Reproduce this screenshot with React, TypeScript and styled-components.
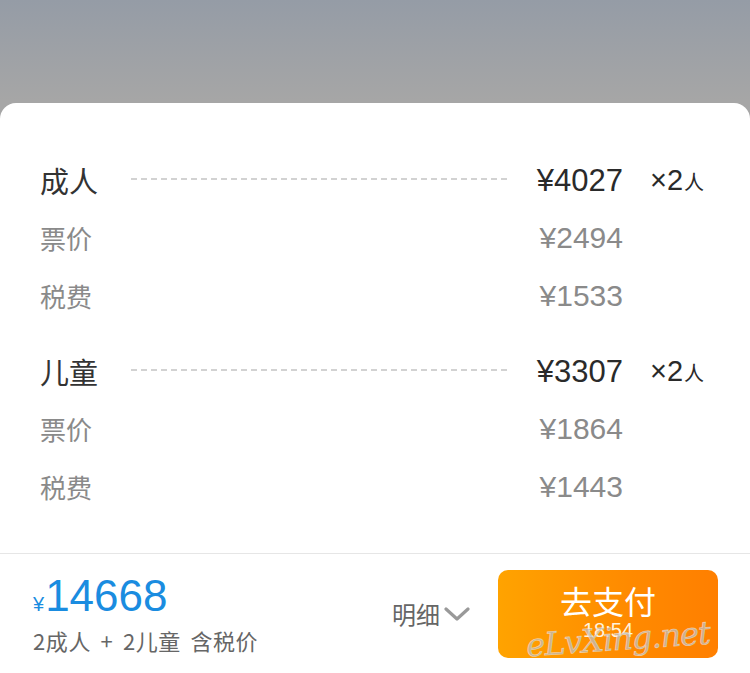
import React from 'react';
import styled, { createGlobalStyle } from 'styled-components';

const GlobalStyle = createGlobalStyle`
  html, body {
    margin: 0;
    padding: 0;
    background: #ffffff;
  }
  body {
    font-family: "Liberation Sans", "Noto Sans CJK SC", sans-serif;
  }
`;

//#region Styled
const Page = styled.div`
  width: 750px;
  height: 673px;
  display: flex;
  flex-direction: column;
  overflow: hidden;
  background: linear-gradient(180deg, #959ca6 0px, #a6a6a6 100px);
`;

const Backdrop = styled.div`
  height: 103px;
  flex: 0 0 auto;
`;

const Sheet = styled.div`
  flex: 1;
  display: flex;
  flex-direction: column;
  background: #ffffff;
  border-radius: 16px 16px 0 0;
`;

const Breakdown = styled.div`
  display: flex;
  flex-direction: column;
  gap: 17px;
  padding: 48px 0 37px;
  border-bottom: 1px solid #e6e6e6;
`;

const Group = styled.div`
  display: flex;
  flex-direction: column;
`;

const Row = styled.div`
  display: grid;
  grid-template-columns: 91px 1fr 116px 83px;
  align-items: center;
  height: 58px;
  padding: 0 44px 0 40px;
`;

const Label = styled.div<{ $main?: boolean }>`
  font-family: "Noto Sans CJK SC", sans-serif;
  font-size: ${(p) => (p.$main ? '29px' : '26px')};
  color: ${(p) => (p.$main ? '#333333' : '#8a8a8a')};
  line-height: 1;
`;

const Dashes = styled.div`
  height: 0;
  border-top: 2px dashed #d2d2d2;
  margin-top: -2px;
`;

const Price = styled.div<{ $main?: boolean }>`
  grid-column: 3;
  justify-self: end;
  font-size: ${(p) => (p.$main ? '31px' : '30px')};
  color: ${(p) => (p.$main ? '#2a2a2a' : '#8a8a8a')};
  line-height: 1;
`;

const Count = styled.div`
  padding-left: 27px;
  font-size: 29px;
  color: #2a2a2a;
  line-height: 1;
  white-space: nowrap;

  small {
    font-family: "Noto Sans CJK SC", sans-serif;
    font-size: 20px;
    margin-left: 1px;
  }
`;

const Footer = styled.div`
  flex: 1;
  display: flex;
  align-items: center;
  padding: 0 32px 0 33px;
  position: relative;
`;

const Total = styled.div`
  flex: 1;
  display: flex;
  flex-direction: column;
  gap: 6px;
  padding-top: 2px;
`;

const Amount = styled.div`
  color: #1a8ce0;
  font-size: 44px;
  line-height: 1;
  display: flex;
  align-items: baseline;

  span {
    font-size: 20px;
    margin-right: 1px;
  }
`;

const Note = styled.div`
  font-family: "Noto Sans CJK SC", sans-serif;
  font-size: 22px;
  letter-spacing: 0.6px;
  word-spacing: 4px;
  color: #666666;
`;

const Detail = styled.button`
  display: flex;
  align-items: center;
  gap: 4px;
  margin-right: 28px;
  padding: 0;
  border: none;
  background: none;
  font-family: "Noto Sans CJK SC", sans-serif;
  font-size: 24px;
  color: #666666;
  cursor: pointer;
`;

const PayButton = styled.button`
  width: 220px;
  height: 88px;
  border: none;
  border-radius: 10px;
  background: linear-gradient(90deg, #ffa300 0%, #ff8a00 60%, #ff7f00 100%);
  color: #ffffff;
  display: flex;
  flex-direction: column;
  align-items: center;
  justify-content: center;
  gap: 2px;
  cursor: pointer;
  padding: 0;
`;

const PayLabel = styled.div`
  font-family: "Noto Sans CJK SC", sans-serif;
  font-size: 32px;
  line-height: 1.1;
  margin-top: -4px;
`;

const Timer = styled.div`
  font-size: 20px;
  color: #fff3dc;
  line-height: 1;
`;

const Watermark = styled.div`
  position: absolute;
  left: 526px;
  top: 66px;
  font-family: "DejaVu Serif", serif;
  font-style: italic;
  font-size: 32px;
  letter-spacing: -1px;
  color: rgba(190, 190, 190, 0.75);
  -webkit-text-stroke: 0.6px rgba(255, 255, 255, 0.5);
  transform: rotate(-4deg);
  pointer-events: none;
`;
//#endregion

interface Line {
  label: string;
  price: string;
}

interface Section {
  title: string;
  price: string;
  count: number;
  lines: Line[];
}

const sections: Section[] = [
  {
    title: '成人',
    price: '¥4027',
    count: 2,
    lines: [
      { label: '票价', price: '¥2494' },
      { label: '税费', price: '¥1533' },
    ],
  },
  {
    title: '儿童',
    price: '¥3307',
    count: 2,
    lines: [
      { label: '票价', price: '¥1864' },
      { label: '税费', price: '¥1443' },
    ],
  },
];

const Chevron = () => (
  <svg width="26" height="16" viewBox="0 0 26 16">
    <path d="M2 3 L13 13 L24 3" fill="none" stroke="#999999" strokeWidth="3.2" strokeLinecap="round" strokeLinejoin="round" />
  </svg>
);

export default function App() {
  return (
    <>
      <GlobalStyle />
      <Page>
        <Backdrop />
        <Sheet>
          <Breakdown>
            {sections.map((s) => (
              <Group key={s.title}>
                <Row>
                  <Label $main>{s.title}</Label>
                  <Dashes />
                  <Price $main>{s.price}</Price>
                  <Count>
                    ×{s.count}
                    <small>人</small>
                  </Count>
                </Row>
                {s.lines.map((l) => (
                  <Row key={l.label}>
                    <Label>{l.label}</Label>
                    <Price>{l.price}</Price>
                  </Row>
                ))}
              </Group>
            ))}
          </Breakdown>
          <Footer>
            <Total>
              <Amount>
                <span>¥</span>14668
              </Amount>
              <Note>2成人 + 2儿童 含税价</Note>
            </Total>
            <Detail>
              明细
              <Chevron />
            </Detail>
            <PayButton>
              <PayLabel>去支付</PayLabel>
              <Timer>18:54</Timer>
            </PayButton>
            <Watermark>eLvXing.net</Watermark>
          </Footer>
        </Sheet>
      </Page>
    </>
  );
}
